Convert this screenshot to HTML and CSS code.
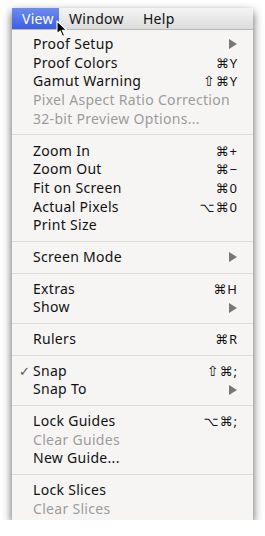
FILE: index.html
```html
<!DOCTYPE html>
<html>
  <head lang="en">
    <meta charset="UTF-8" />
    <title>View menu</title>
    <link rel="stylesheet" href="styles.css">
  </head>

  <body>
    <div id="menu">
      <div class="bar">
        <span class="title active">View</span>
        <span class="title">Window</span>
        <span class="title">Help</span>
        <svg class="cursor" width="12" height="18" viewBox="0 0 12 18">
          <path d="M1 1 L1 14 L4.2 11 L6.5 16.5 L8.6 15.6 L6.3 10.2 L10.6 10.2 Z" fill="#000" stroke="#fff" stroke-width="1.1" stroke-linejoin="round" />
        </svg>
      </div>
      <div class="drop">
        <ul>
          <li><span class="name">Proof Setup</span><span class="sub"></span></li>
          <li><span class="name">Proof Colors</span><span class="key">⌘Y</span></li>
          <li><span class="name">Gamut Warning</span><span class="key"><i>⇧</i>⌘Y</span></li>
          <li class="off"><span class="name">Pixel Aspect Ratio Correction</span></li>
          <li class="off"><span class="name">32-bit Preview Options...</span></li>
        </ul>
        <ul>
          <li><span class="name">Zoom In</span><span class="key">⌘+</span></li>
          <li><span class="name">Zoom Out</span><span class="key">⌘−</span></li>
          <li><span class="name">Fit on Screen</span><span class="key">⌘0</span></li>
          <li><span class="name">Actual Pixels</span><span class="key">⌥⌘0</span></li>
          <li><span class="name">Print Size</span></li>
        </ul>
        <ul>
          <li><span class="name">Screen Mode</span><span class="sub"></span></li>
        </ul>
        <ul>
          <li><span class="name">Extras</span><span class="key">⌘H</span></li>
          <li><span class="name">Show</span><span class="sub"></span></li>
        </ul>
        <ul>
          <li><span class="name">Rulers</span><span class="key">⌘R</span></li>
        </ul>
        <ul>
          <li class="checked"><span class="name">Snap</span><span class="key"><i>⇧</i>⌘;</span></li>
          <li><span class="name">Snap To</span><span class="sub"></span></li>
        </ul>
        <ul>
          <li><span class="name">Lock Guides</span><span class="key">⌥⌘;</span></li>
          <li class="off"><span class="name">Clear Guides</span></li>
          <li><span class="name">New Guide...</span></li>
        </ul>
        <ul>
          <li><span class="name">Lock Slices</span></li>
          <li class="off"><span class="name">Clear Slices</span></li>
        </ul>
      </div>
    </div>
  </body>
</html>
```

FILE: styles.css
```css
body,
div,
ul,
li {
  margin: 0;
  padding: 0;
}

ul {
  list-style-type: none;
}

body {
  background: #fff;
  font: 14px/18.5px "Noto Sans", "DejaVu Sans", sans-serif;
  color: #111;
  padding: 8px 12px 0 12px;
}

#menu {
  width: 241px;
  box-shadow: 0 4px 9px rgba(0, 0, 0, 0.65);
}

#menu .bar {
  position: relative;
  height: 22px;
  display: flex;
  background: linear-gradient(#f4f4f4, #dcdcdc);
  border-bottom: 1px solid #b8b8b8;
  box-sizing: border-box;
}

#menu .title {
  padding: 0 9px;
  line-height: 21px;
  color: #111;
  letter-spacing: 0.3px;
}

#menu .title + .title {
  padding-left: 10px;
}

#menu .title.active {
  width: 47px;
  box-sizing: border-box;
  padding-left: 10px;
  color: #fff;
  background: linear-gradient(#6c8cf0, #3d5fe0);
}

#menu .cursor {
  position: absolute;
  left: 44px;
  top: 12px;
}

#menu .drop {
  background: #f7f5f4;
  padding: 5px 0 2px;
}

#menu .drop ul + ul {
  border-top: 1px solid #dedcdb;
  margin-top: 6px;
  padding-top: 6px;
}

#menu .drop li {
  display: flex;
  align-items: center;
  height: 18.7px;
  padding: 0 15px 0 21px;
  position: relative;
  letter-spacing: 0.3px;
}

#menu .drop li.off {
  color: #9c9c9c;
}

#menu .drop li.checked::before {
  content: "✓";
  position: absolute;
  left: 7px;
  color: #555;
  font-size: 13px;
}

#menu .name {
  flex: 1;
}

#menu .key {
  font-size: 13px;
  letter-spacing: 1px;
}

#menu .key i {
  font-style: normal;
  font-family: "DejaVu Sans", sans-serif;
  font-size: 14px;
}

#menu .sub {
  width: 0;
  height: 0;
  border-left: 8px solid #777;
  border-top: 5px solid transparent;
  border-bottom: 5px solid transparent;
  margin-right: 1px;
}
```
